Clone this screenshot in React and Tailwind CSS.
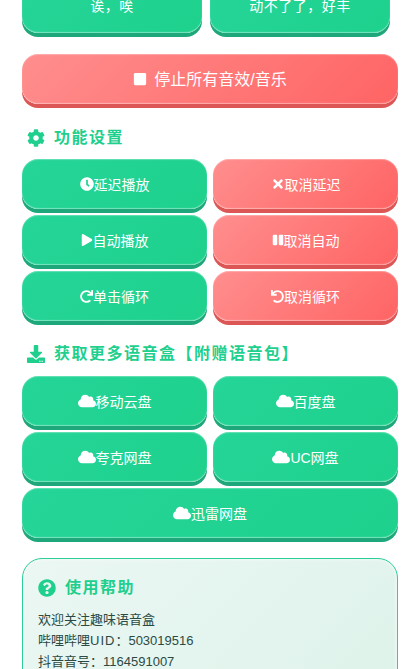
import React from "react";
import {
  FaStop,
  FaCog,
  FaClock,
  FaTimes,
  FaPlay,
  FaPause,
  FaRedo,
  FaUndo,
  FaDownload,
  FaCloud,
  FaQuestionCircle,
} from "react-icons/fa";

function SoundButton({ color = "green", icon: Icon, iconSize = 14, className = "", children }) {
  const colors =
    color === "green"
      ? "bg-[linear-gradient(135deg,#25d599,#1ed18c)] shadow-[0_4px_0_#1fa77c,inset_0_1px_1px_rgba(255,255,255,0.3),inset_0_-1px_1px_rgba(255,255,255,0.4)]"
      : "bg-[linear-gradient(135deg,#ff8e8e,#ff6464)] shadow-[0_4px_0_#dc5656,inset_0_1px_1px_rgba(255,255,255,0.3),inset_0_-1px_1px_rgba(255,255,255,0.4)]";
  return (
    <button className={`h-[50px] rounded-[16px] flex items-center justify-center text-white text-sm ${colors} ${className}`}>
      {Icon && <Icon size={iconSize} className="shrink-0" />}
      <span className="pt-[2px]">{children}</span>
    </button>
  );
}

function SectionTitle({ icon: Icon, iconSize = 18, children }) {
  return (
    <h3 className="flex items-center gap-[9px] pl-[5px] text-[#1fcf8e] text-base font-bold tracking-[1.5px] leading-[22px]">
      <Icon size={iconSize} className="shrink-0" />
      <span>{children}</span>
    </h3>
  );
}

export default function App() {
  return (
    <div
      className="h-[669px] overflow-hidden bg-white px-[22px] font-['Liberation_Sans','Noto_Sans_CJK_SC',sans-serif]"
    >
      {/* page is scrolled, top row is cut off */}
      <div className="grid grid-cols-2 gap-2 w-[368px] -mt-[17px]">
        <SoundButton className="tracking-[0.5px] pb-[6px]">诶，唉</SoundButton>
        <SoundButton className="tracking-[0.5px] pb-[6px]">动不了了，好丰</SoundButton>
      </div>

      <button className="mt-[21px] w-full h-[50px] rounded-[16px] flex items-center justify-center gap-[7px] text-white text-base bg-[linear-gradient(135deg,#ff8e8e,#ff6464)] shadow-[0_4px_0_#dc5656,inset_0_1px_1px_rgba(255,255,255,0.3),inset_0_-1px_1px_rgba(255,255,255,0.4)]">
        <FaStop size={14} />
        <span className="pt-[2px]">停止所有音效/音乐</span>
      </button>

      <div className="mt-[23px]">
        <SectionTitle icon={FaCog}>功能设置</SectionTitle>
      </div>

      <div className="mt-[10px] grid grid-cols-2 gap-x-[6px] gap-y-[6px]">
        <SoundButton icon={FaClock}>延迟播放</SoundButton>
        <SoundButton color="red" icon={FaTimes}>取消延迟</SoundButton>
        <SoundButton icon={FaPlay} iconSize={12}>自动播放</SoundButton>
        <SoundButton color="red" icon={FaPause} iconSize={12}>取消自动</SoundButton>
        <SoundButton icon={FaRedo} iconSize={13}>单击循环</SoundButton>
        <SoundButton color="red" icon={FaUndo} iconSize={13}>取消循环</SoundButton>
      </div>

      <div className="mt-[22px]">
        <SectionTitle icon={FaDownload}>获取更多语音盒【附赠语音包】</SectionTitle>
      </div>

      <div className="mt-[11px] grid grid-cols-2 gap-[6px]">
        <SoundButton icon={FaCloud} iconSize={18}>移动云盘</SoundButton>
        <SoundButton icon={FaCloud} iconSize={18}>百度盘</SoundButton>
        <SoundButton icon={FaCloud} iconSize={18}>夸克网盘</SoundButton>
        <SoundButton icon={FaCloud} iconSize={18}>UC网盘</SoundButton>
        <SoundButton icon={FaCloud} iconSize={18} className="col-span-2">迅雷网盘</SoundButton>
      </div>

      <div className="mt-[20px] h-[200px] rounded-[20px] border border-[#2ccf97] bg-[linear-gradient(135deg,#ebf7f3,#dcf2e9)] px-[15px] pt-[17px] shadow-[inset_0_0_4px_rgba(255,255,255,0.8)]">
        <h3 className="flex items-center gap-[9px] text-[#1fcf8e] text-base font-bold tracking-[1.5px] leading-[24px]">
          <FaQuestionCircle size={18} className="shrink-0" />
          <span>使用帮助</span>
        </h3>
        <div className="mt-[9px] text-[13px] leading-[21px] text-[#2c4a44]">
          <p>欢迎关注趣味语音盒</p>
          <p>哔哩哔哩<span className="tracking-[1px]">UID</span>：503019516</p>
          <p>抖音音号：1164591007</p>
        </div>
      </div>
    </div>
  );
}
